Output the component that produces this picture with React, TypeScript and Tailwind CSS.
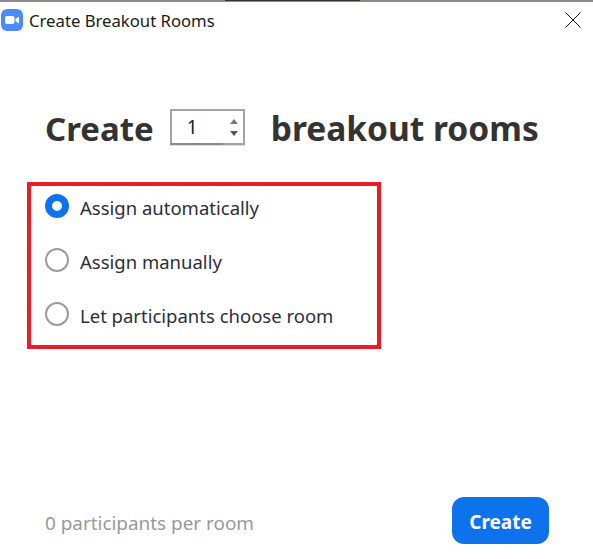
import React from "react"

const sans = "font-['Noto_Sans','Open_Sans',sans-serif]"

function ZoomLogo() {
  return (
    <svg width="22" height="22" viewBox="0 0 22 22" className="shrink-0">
      <rect x="0" y="0" width="22" height="22" rx="6" fill="#4a8cff" />
      <rect x="4" y="7" width="9.5" height="8" rx="2" fill="#fff" />
      <path d="M14.5 10l3.5-2.6v7.2l-3.5-2.6z" fill="#fff" />
    </svg>
  )
}

function Radio({ label, checked }: { label: string; checked?: boolean }) {
  return (
    <div className="flex h-[54px] items-start">
      {checked ? (
        <div className="h-6 w-6 shrink-0 rounded-full border-[7px] border-[#0e72ed] bg-white" />
      ) : (
        <div className="h-6 w-6 shrink-0 rounded-full border-2 border-[#9b9b9b] bg-white" />
      )}
      <span className="ml-[11px] text-[18.5px] leading-[28px] text-[#2d2d3a]">{label}</span>
    </div>
  )
}

export default function App() {
  return (
    <div className={`flex h-[559px] w-[593px] flex-col overflow-hidden bg-white ${sans}`}>
      {/* Window edge, wallpaper shows at the top */}
      <div className="flex h-[2px] shrink-0 bg-[#8a8a8a]">
        <div className="ml-[225px] h-px w-[135px] bg-[#3a3226]" />
      </div>

      {/* Title bar */}
      <div className="flex h-[36px] shrink-0 items-center pl-px pr-[12px]">
        <ZoomLogo />
        <span className="ml-[6px] pt-[2px] text-[16.7px] leading-none text-[#1a1a1a]">Create Breakout Rooms</span>
        <svg width="16" height="16" viewBox="0 0 16 16" className="ml-auto">
          <path d="M.5.5l15 15M15.5.5l-15 15" stroke="#111" strokeWidth="1" fill="none" />
        </svg>
      </div>

      {/* Heading */}
      <div className="mt-[70px] flex h-[42px] shrink-0 items-center pl-[45px] font-bold leading-none text-[#333333]">
        <span className="-mt-px text-[33px]">Create</span>
        <div className="relative -mt-[4px] ml-[16px] flex h-[36px] w-[75px] items-center border-2 border-[#a3a3a3] pl-[15px] pr-[5px]">
          <span className="text-[19px] font-normal text-[#222]">1</span>
          <div className="ml-auto flex flex-col gap-[7px]">
            <div className="h-0 w-0 border-x-[4px] border-b-[5px] border-x-transparent border-b-[#777]" />
            <div className="h-0 w-0 border-x-[4px] border-t-[5px] border-x-transparent border-t-[#555]" />
          </div>
          {/* darker stretch of the field's underline */}
          <div className="absolute -bottom-[2px] -left-[2px] h-[2px] w-[53px] bg-[#8a8a8a]" />
          <div className="absolute -bottom-[3px] -left-[2px] h-px w-[75px] bg-[#dddddd]" />
        </div>
        <span className="-mt-px ml-[26px] text-[33.5px]">breakout rooms</span>
      </div>

      {/* Assignment options */}
      <div className="ml-[27px] mt-[32px] h-[167px] w-[354px] shrink-0 border-4 border-[#ed1c24] pl-[14px] pt-[8px]">
        <Radio label="Assign automatically" checked />
        <Radio label="Assign manually" />
        <Radio label="Let participants choose room" />
      </div>

      {/* Footer */}
      <div className="mt-[148px] flex h-[47px] shrink-0 items-center justify-between pl-[45px] pr-[44px]">
        <span className="pt-[6px] text-[18.9px] leading-none text-[#999999]">0 participants per room</span>
        <button className="h-[47px] w-[97px] rounded-[12px] bg-[#0e72ed] pt-[3px] text-[19px] font-bold leading-none text-white">
          Create
        </button>
      </div>
    </div>
  )
}
